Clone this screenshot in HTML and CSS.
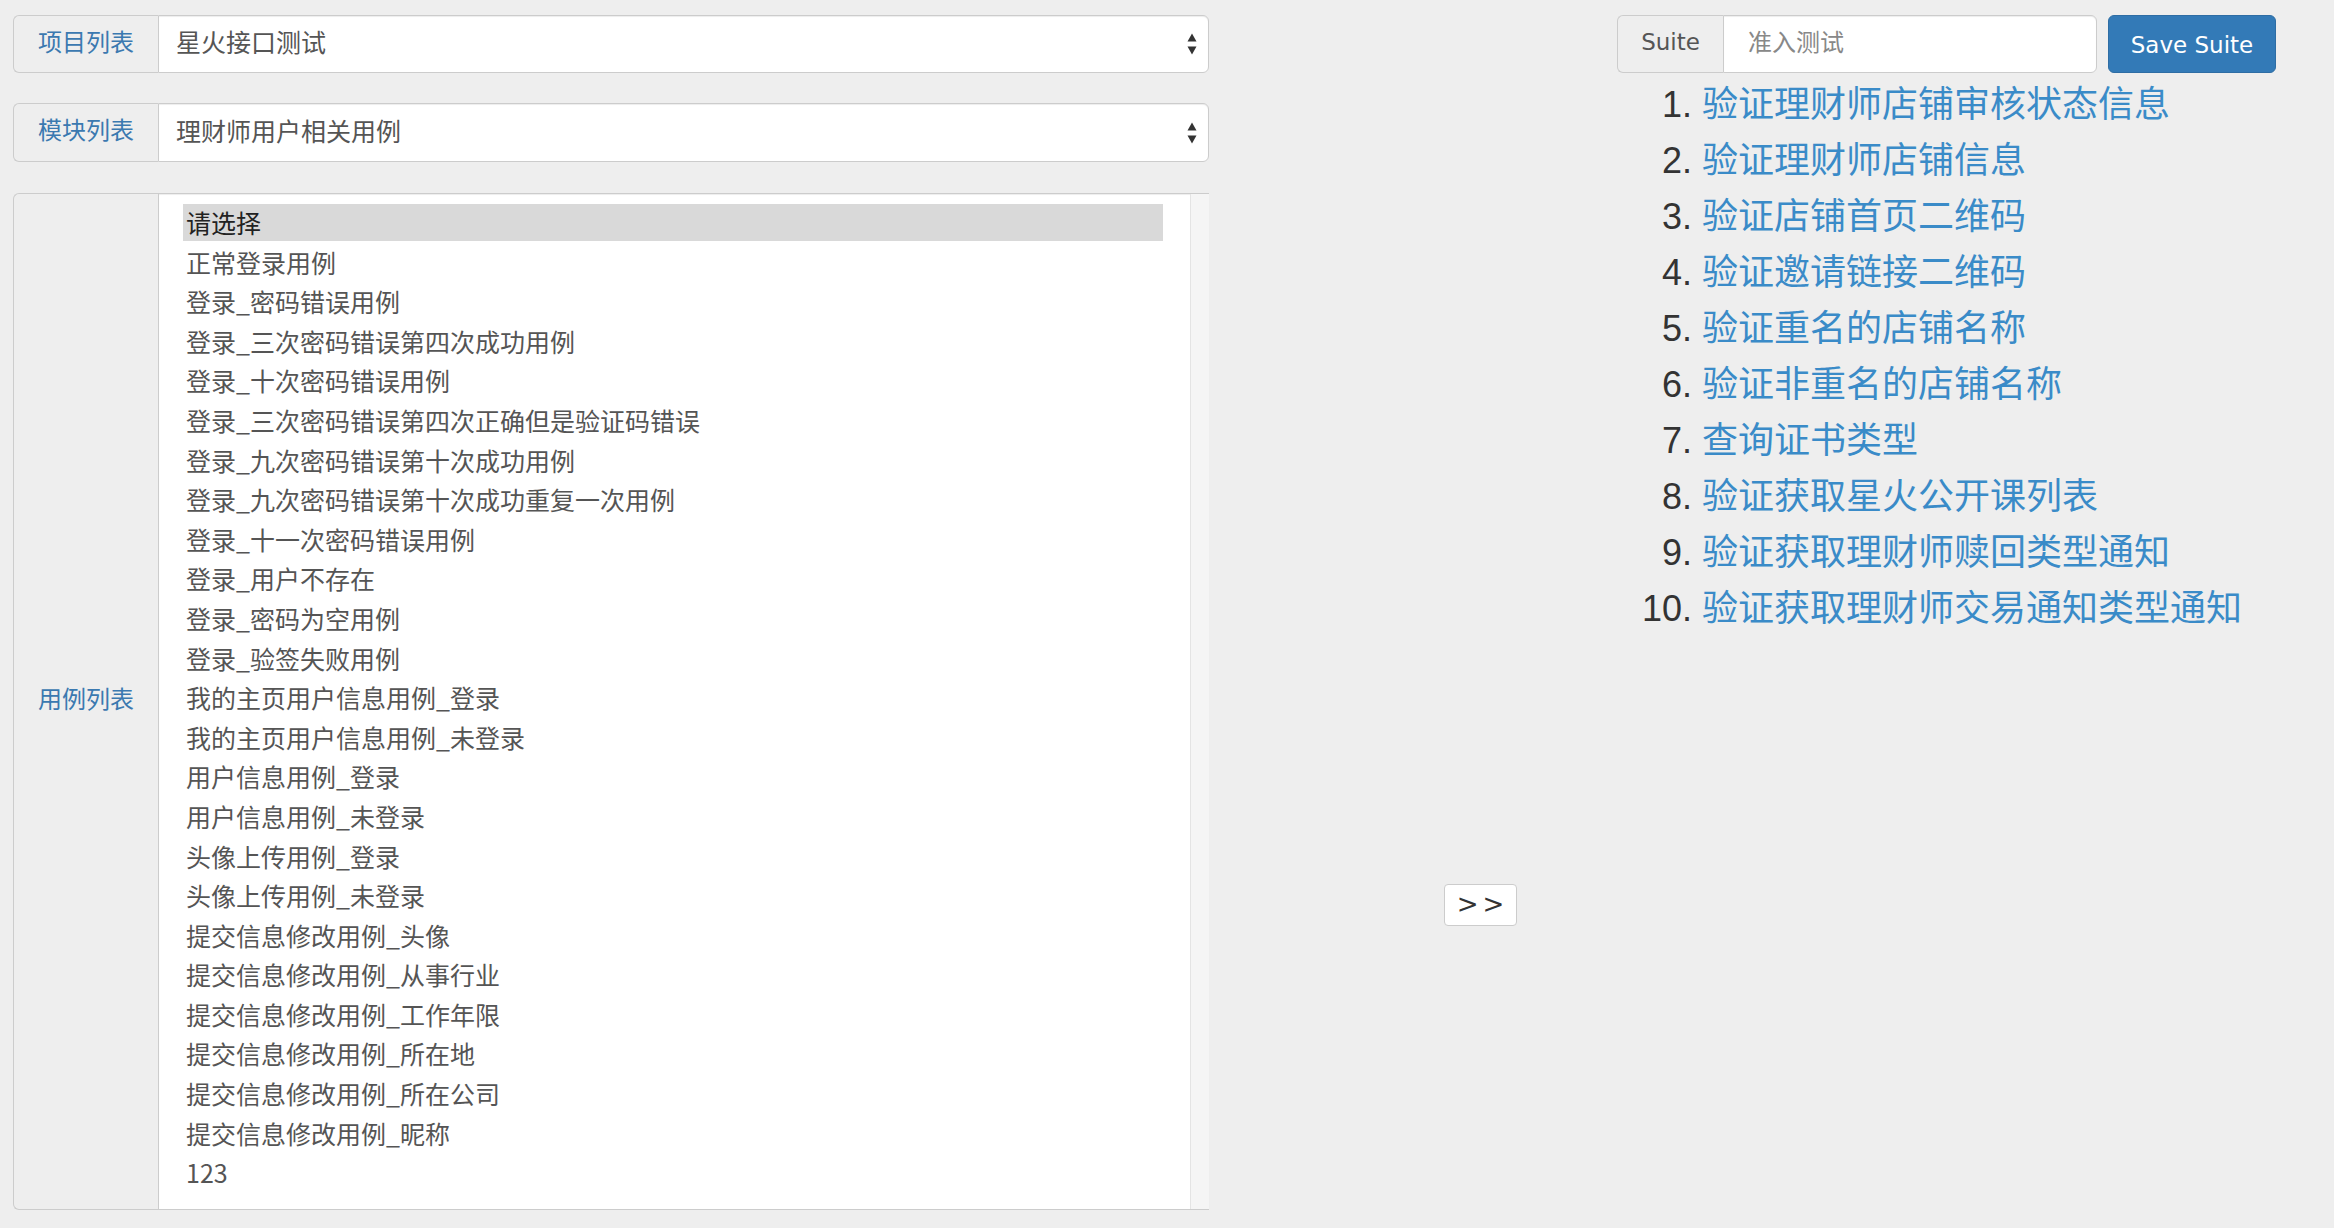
FILE: index.html
```html
<!DOCTYPE html>
<html lang="zh-CN">
<head>
<meta charset="utf-8">
<title>Suite</title>
<link rel="stylesheet" href="styles.css">
</head>
<body>
<div class="page">
  <div class="left">
    <div class="group row1">
      <span class="addon">项目列表</span>
      <div class="select">
        <span class="select-text">星火接口测试</span>
        <svg class="arrows" width="12" height="26" viewBox="0 0 12 26"><path d="M1.5 10.5 L6 2.5 L10.5 10.5 Z M1.5 15.5 L6 23.5 L10.5 15.5 Z" fill="#333"/></svg>
      </div>
    </div>
    <div class="group row2">
      <span class="addon">模块列表</span>
      <div class="select">
        <span class="select-text">理财师用户相关用例</span>
        <svg class="arrows" width="12" height="26" viewBox="0 0 12 26"><path d="M1.5 10.5 L6 2.5 L10.5 10.5 Z M1.5 15.5 L6 23.5 L10.5 15.5 Z" fill="#333"/></svg>
      </div>
    </div>
    <div class="group row3">
      <span class="addon">用例列表</span>
      <div class="listbox">
        <div class="options">
          <div class="option selected">请选择</div>
          <div class="option">正常登录用例</div>
          <div class="option">登录_密码错误用例</div>
          <div class="option">登录_三次密码错误第四次成功用例</div>
          <div class="option">登录_十次密码错误用例</div>
          <div class="option">登录_三次密码错误第四次正确但是验证码错误</div>
          <div class="option">登录_九次密码错误第十次成功用例</div>
          <div class="option">登录_九次密码错误第十次成功重复一次用例</div>
          <div class="option">登录_十一次密码错误用例</div>
          <div class="option">登录_用户不存在</div>
          <div class="option">登录_密码为空用例</div>
          <div class="option">登录_验签失败用例</div>
          <div class="option">我的主页用户信息用例_登录</div>
          <div class="option">我的主页用户信息用例_未登录</div>
          <div class="option">用户信息用例_登录</div>
          <div class="option">用户信息用例_未登录</div>
          <div class="option">头像上传用例_登录</div>
          <div class="option">头像上传用例_未登录</div>
          <div class="option">提交信息修改用例_头像</div>
          <div class="option">提交信息修改用例_从事行业</div>
          <div class="option">提交信息修改用例_工作年限</div>
          <div class="option">提交信息修改用例_所在地</div>
          <div class="option">提交信息修改用例_所在公司</div>
          <div class="option">提交信息修改用例_昵称</div>
          <div class="option">123</div>
        </div>
        <div class="track"></div>
      </div>
    </div>
  </div>
  <div class="middle">
    <button class="move-btn">&gt;&gt;</button>
  </div>
  <div class="right">
    <div class="suite-row">
      <div class="suite-group">
        <span class="suite-addon">Suite</span>
        <div class="suite-input">准入测试</div>
      </div>
      <button class="save-btn">Save Suite</button>
    </div>
    <ol class="suite-list">
      <li><a href="#">验证理财师店铺审核状态信息</a></li>
      <li><a href="#">验证理财师店铺信息</a></li>
      <li><a href="#">验证店铺首页二维码</a></li>
      <li><a href="#">验证邀请链接二维码</a></li>
      <li><a href="#">验证重名的店铺名称</a></li>
      <li><a href="#">验证非重名的店铺名称</a></li>
      <li><a href="#">查询证书类型</a></li>
      <li><a href="#">验证获取星火公开课列表</a></li>
      <li><a href="#">验证获取理财师赎回类型通知</a></li>
      <li><a href="#">验证获取理财师交易通知类型通知</a></li>
    </ol>
  </div>
</div>
</body>
</html>
```

FILE: styles.css
```css
html, body {
  margin: 0;
  padding: 0;
  background: #eeeeee;
}

body {
  font-family: "Liberation Sans", "Noto Sans CJK SC", sans-serif;
  color: #555;
  width: 2334px;
  height: 1228px;
  overflow: hidden;
}

.page {
  display: flex;
  align-items: flex-start;
  padding: 15px 0 0 13px;
}

.left {
  width: 1196px;
  display: flex;
  flex-direction: column;
}

.group {
  display: flex;
  height: 58px;
}

.row2 {
  margin-top: 30px;
  height: 59px;
}

.row3 {
  margin-top: 31px;
  height: 1017px;
}

.addon {
  box-sizing: border-box;
  width: 145px;
  flex: none;
  display: flex;
  align-items: center;
  justify-content: center;
  padding-bottom: 8px;
  background: #eeeeee;
  border: 1px solid #cccccc;
  border-right: 0;
  border-radius: 6px 0 0 6px;
  color: #3b79b0;
  font-family: "Noto Sans CJK SC", sans-serif;
  font-size: 24px;
}

.select {
  flex: 1;
  box-sizing: border-box;
  display: flex;
  align-items: center;
  justify-content: space-between;
  background: #fff;
  border: 1px solid #cccccc;
  border-radius: 0 6px 6px 0;
  padding: 0 10px 0 17px;
  font-family: "Noto Sans CJK SC", sans-serif;
  font-size: 25px;
  color: #555;
  box-shadow: inset 0 1px 1px rgba(0, 0, 0, 0.075);
}

.select-text {
  position: relative;
  top: -3px;
}

.arrows {
  display: block;
}

.listbox {
  flex: 1;
  box-sizing: border-box;
  display: flex;
  background: #fff;
  border: 1px solid #cccccc;
  border-right: 0;
  box-shadow: inset 0 1px 1px rgba(0, 0, 0, 0.075);
}

.options {
  flex: 1;
  padding: 10px 27px 0 24px;
}

.option {
  height: 37px;
  line-height: 37px;
  margin-bottom: 2.6px;
  padding-left: 3px;
  font-family: "Noto Sans CJK SC", sans-serif;
  font-size: 25px;
  color: #555;
  white-space: nowrap;
}

.option.selected {
  background: #d9d9d9;
  color: #222;
}

.track {
  width: 18px;
  flex: none;
  background: #f5f5f5;
  border-left: 1px solid #e4e4e4;
}

.middle {
  width: 408px;
  flex: none;
}

.move-btn {
  display: block;
  margin: 869px 0 0 235px;
  width: 73px;
  height: 42px;
  box-sizing: border-box;
  background: #fff;
  border: 1px solid #cccccc;
  border-radius: 4px;
  color: #333;
  font-family: "DejaVu Sans", sans-serif;
  font-size: 26px;
  letter-spacing: 4px;
  padding: 0 0 3px 4px;
}

.right {
  width: 680px;
  flex: none;
}

.suite-row {
  display: flex;
  height: 58px;
}

.suite-group {
  width: 480px;
  display: flex;
}

.suite-addon {
  box-sizing: border-box;
  width: 106px;
  display: flex;
  align-items: center;
  justify-content: center;
  padding-bottom: 4px;
  background: #eeeeee;
  border: 1px solid #cccccc;
  border-right: 0;
  border-radius: 6px 0 0 6px;
  font-family: "DejaVu Sans", sans-serif;
  font-size: 23px;
  color: #555;
}

.suite-input {
  flex: 1;
  box-sizing: border-box;
  display: flex;
  align-items: center;
  background: #fff;
  border: 1px solid #cccccc;
  border-radius: 0 6px 6px 0;
  padding-left: 24px;
  padding-bottom: 7px;
  font-family: "Noto Sans CJK SC", sans-serif;
  font-size: 24px;
  color: #888;
  box-shadow: inset 0 1px 1px rgba(0, 0, 0, 0.075);
}

.save-btn {
  margin-left: 11px;
  width: 168px;
  height: 58px;
  box-sizing: border-box;
  background: #337ab7;
  border: 1px solid #2e6da4;
  border-radius: 6px;
  color: #fff;
  font-family: "DejaVu Sans", sans-serif;
  font-size: 23px;
  padding: 2px 0 0 0;
}

.suite-list {
  margin: 0;
  padding-left: 85px;
  font-size: 36px;
  line-height: 56px;
  color: #333;
  font-family: "Liberation Sans", "Noto Sans CJK SC", sans-serif;
}

.suite-list li {
  height: 56px;
}

.suite-list a {
  color: #3a8bc8;
  text-decoration: none;
  font-family: "Noto Sans CJK SC", sans-serif;
  line-height: 56px;
}
```
